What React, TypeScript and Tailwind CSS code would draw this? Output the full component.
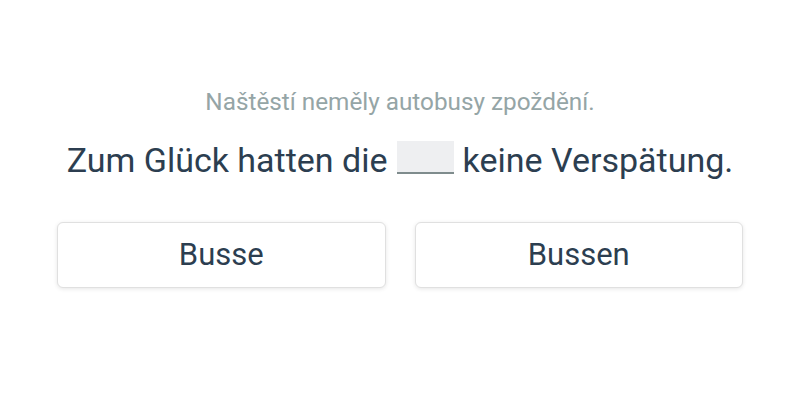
export default function App() {
  const options = ["Busse", "Bussen"];
  return (
    <div className="flex h-[400px] w-full flex-col items-center bg-white font-['Roboto',sans-serif]">
      <p className="mt-[86px] text-[24.3px] leading-[32px] text-[#95a5a6]">
        Naštěstí neměly autobusy zpoždění.
      </p>
      <p className="mt-[20px] flex h-[44px] items-center text-[34px] leading-[44px] text-[#2c3e50]">
        <span>Zum Glück hatten die</span>
        <span className="mx-[9px] -mt-[6px] inline-block h-[33px] w-[57px] border-b-2 border-[#7f8c8d] bg-[#eeeff1]" />
        <span>keine Verspätung.</span>
      </p>
      <div className="mt-[40px] grid w-[686px] grid-cols-2 gap-[29px]">
        {options.map((o) => (
          <button
            key={o}
            className="h-[66px] rounded-md border border-[#e0e0e0] bg-white text-[31px] text-[#2c3e50] shadow-[0_1px_4px_rgba(0,0,0,0.1)]"
          >
            {o}
          </button>
        ))}
      </div>
    </div>
  );
}
